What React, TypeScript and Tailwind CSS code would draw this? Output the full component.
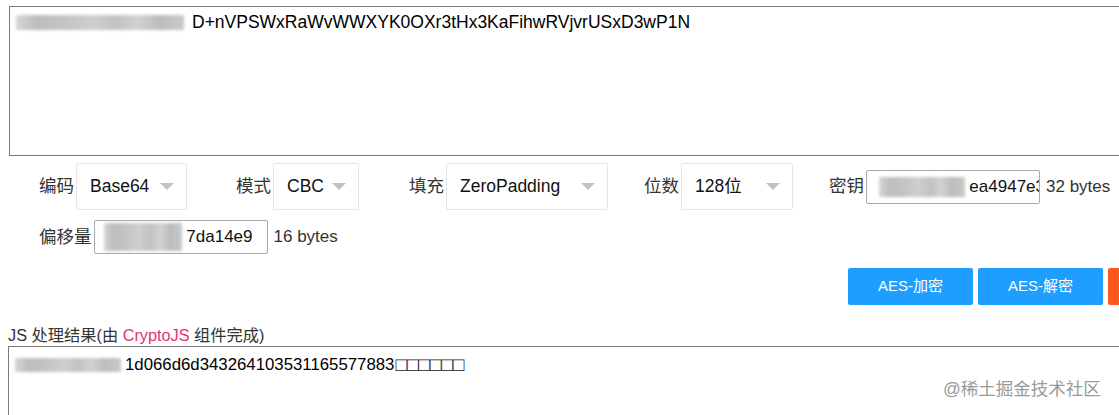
import React from "react";

const font = { fontFamily: '"Liberation Sans", Arial, "Noto Sans CJK SC", sans-serif' };

// blurred (redacted) patch in the screenshot
function Smudge({ className }: { className: string }) {
  return (
    <span
      className={`inline-block shrink-0 blur-[1.5px] bg-[linear-gradient(90deg,#d6d6d6_0%,#bdbdbd_12%,#c4c4c4_30%,#cfcfcf_45%,#c2c2c2_60%,#d2d2d2_72%,#bcbcbc_85%,#c9c9c9_100%)] ${className}`}
    />
  );
}

function Select({ value, width }: { value: string; width: string }) {
  return (
    <div
      className={`flex h-[47px] items-center justify-between rounded-[2px] border border-[#e6e6e6] bg-white pl-[13px] pr-[12px] text-[17.5px] text-[#111] ${width}`}
    >
      <span>{value}</span>
      <span className="h-0 w-0 border-x-[7px] border-t-[7px] border-x-transparent border-t-[#c2c2c2]" />
    </div>
  );
}

function Label({ text, className = "" }: { text: string; className?: string }) {
  return <span className={`mr-[2px] text-[17.5px] text-[#333] ${className}`}>{text}</span>;
}

export default function App() {
  return (
    <div className="relative h-[415px] w-[1119px] overflow-hidden bg-white" style={font}>
      <div className="w-[1250px] pl-[9px] pt-[6px]">
        {/* source textarea */}
        <div className="h-[150px] border border-[#7a7a7a] pl-[6px] pt-[5px] text-[17.5px] leading-[20px] text-black">
          <div className="flex items-center whitespace-nowrap">
            <Smudge className="h-[15px] w-[168px]" />
            <span className="ml-[8px]">D+nVPSWxRaWvWWXYK0OXr3tHx3KaFihwRVjvrUSxD3wP1N</span>
          </div>
        </div>

        {/* options row */}
        <div className="mt-[7px] flex h-[47px] items-center pl-[30px]">
          <Label text="编码" />
          <Select value="Base64" width="w-[111px]" />
          <Label text="模式" className="ml-[49px]" />
          <Select value="CBC" width="w-[86px]" />
          <Label text="填充" className="ml-[50px]" />
          <Select value="ZeroPadding" width="w-[162px]" />
          <Label text="位数" className="ml-[36px]" />
          <Select value="128位" width="w-[112px]" />
          <Label text="密钥" className="ml-[36px]" />
          <div className="flex h-[34px] w-[174px] items-center justify-end overflow-hidden rounded-[2px] border border-[#a9a9a9] text-[17px] text-[#111] whitespace-nowrap">
            <Smudge className="mr-[4px] h-[20px] w-[86px]" />
            <span className="mr-[-6px]">ea4947e3</span>
          </div>
          <span className="ml-[6px] text-[17px] text-[#333]">32 bytes</span>
        </div>

        {/* iv row */}
        <div className="mt-[10px] flex h-[34px] items-center pl-[30px]">
          <Label text="偏移量" />
          <div className="flex h-[34px] w-[174px] items-center justify-end overflow-hidden rounded-[2px] border border-[#a9a9a9] pr-[14px] text-[17px] text-[#111] whitespace-nowrap">
            <Smudge className="mr-[4px] h-[28px] w-[78px]" />
            <span>7da14e9</span>
          </div>
          <span className="ml-[6px] text-[17px] text-[#333]">16 bytes</span>
        </div>

        {/* actions */}
        <div className="mt-[14px] flex h-[37px] gap-[5px] pl-[839px]">
          <button className="h-[37px] w-[125px] rounded-[2px] bg-[#1e9fff] text-[15px] text-white">AES-加密</button>
          <button className="h-[37px] w-[125px] rounded-[2px] bg-[#1e9fff] text-[15px] text-white">AES-解密</button>
          <button className="h-[37px] w-[125px] rounded-[2px] bg-[#ff5722] text-[15px] text-white"></button>
        </div>

        {/* result */}
        <div className="-ml-[1px] mt-[19px] h-[22px] text-[16.25px] leading-[22px] text-[#333]">
          JS 处理结果(由 <span className="text-[#e5336a]">CryptoJS</span> 组件完成)
        </div>
        <div className="-ml-[1px] h-[80px] border border-[#7a7a7a] pl-[6px] pt-[8px] text-[16.8px] leading-[19px] text-black">
          <div className="flex items-center whitespace-nowrap">
            <Smudge className="h-[14px] w-[106px]" />
            <span className="ml-[4px]">1d066d6d343264103531165577883</span>
            <span className="ml-[1px] text-[19px] text-[#222]">□□□□□□</span>
          </div>
        </div>
      </div>

      {/* watermark */}
      <div className="absolute left-[943px] top-[376px] text-[17.5px] text-[#9a9a9a]">@稀土掘金技术社区</div>
    </div>
  );
}
